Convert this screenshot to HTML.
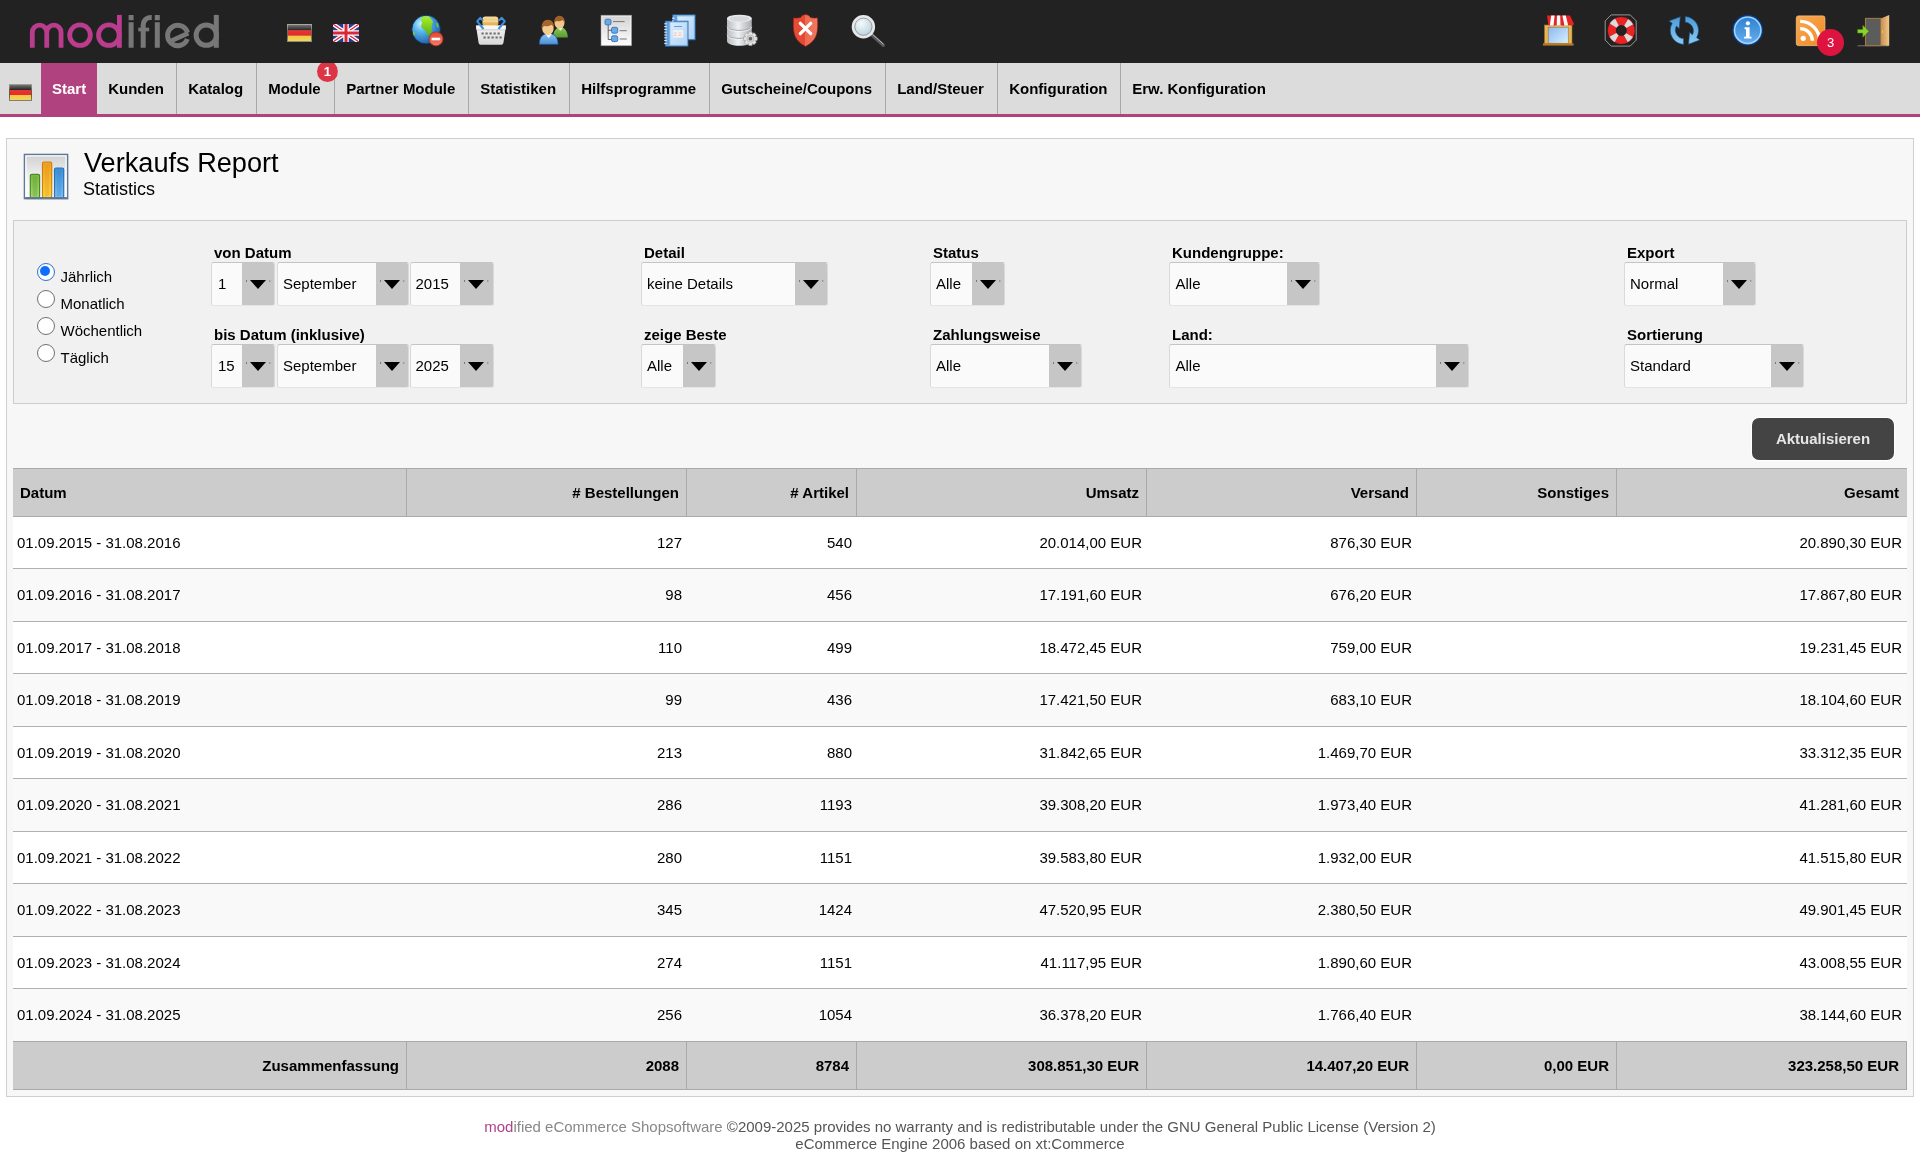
<!DOCTYPE html><html><head><meta charset="utf-8"><title>Verkaufs Report</title><style>
*{box-sizing:border-box;margin:0;padding:0}
html,body{width:1920px;height:1167px;overflow:hidden;background:#fff}
body{font-family:"Liberation Sans",sans-serif;font-size:15px;color:#000;position:relative}
.a{position:absolute}
#hdr{left:0;top:0;width:1920px;height:63px;background:#222}
#tabs{left:0;top:63px;width:1920px;height:51px;background:#dcdcdc}
#pink{left:0;top:114px;width:1920px;height:3px;background:#b0437f}
.tab{top:63px;height:51px;line-height:51px;font-weight:bold;font-size:15px;color:#000;white-space:nowrap;padding-left:11.2px}
.sep{top:63px;width:1px;height:51px;background:#a8a8a8}
.badge{border-radius:50%;background:#dc3545;color:#fff;text-align:center;font-size:14px}
#box{left:6px;top:138px;width:1908px;height:959px;background:#f7f7f7;border:1px solid #cfcfcf}
#filter{left:13px;top:220px;width:1894px;height:184px;background:#f1f1f1;border:1px solid #cccccc}
.lbl{font-weight:bold;font-size:15px;white-space:nowrap;line-height:17px}
.sel{height:44px;background:#fafafa;border:1px solid #dadada;border-top-color:#c4c4c4;border-bottom-color:#e4e4e4;border-radius:2.5px;overflow:hidden}
.sel span{position:absolute;left:5px;top:0;line-height:41px;font-size:15px;white-space:nowrap}
.sel i{position:absolute;right:0;top:0;width:32.4px;height:42px;background:#c6c6c6}
.sel i:after{content:"";position:absolute;left:8.1px;top:16.9px;border-left:8.2px solid transparent;border-right:8.2px solid transparent;border-top:9.6px solid #000}
.sel i:before{content:"";position:absolute;left:4.1px;top:17.4px;width:1px;height:2px;background:#777;box-shadow:23.3px 0 0 #888}
.radio{width:18px;height:18px;border-radius:50%;border:1.4px solid #707070;background:#fff}
.radio.on{border:1.9px solid #2b6fd1;background:#fff}
.radio.on:after{content:"";position:absolute;left:1.85px;top:1.85px;width:10.5px;height:10.5px;border-radius:50%;background:#0d6efd}
.rl{font-size:15px;white-space:nowrap;line-height:17px}
#btn{left:1752px;top:418px;width:142px;height:42px;background:#444;border-radius:7px;color:#e6e6e6;font-weight:bold;text-align:center;line-height:42px;box-shadow:0 0 0 1px #fff}
.row{left:13px;width:1894px;height:53px}
.cell{position:absolute;top:0;white-space:nowrap;font-size:15px}
.hd{background:#cccccc;border-top:1px solid #a9a9a9;border-bottom:1px solid #a9a9a9}
.vs{position:absolute;top:0;width:1px;background:#a9a9a9}
.hs{left:13px;width:1894px;height:1px;background:#b0b0b0}
#foot{left:0;top:1118px;width:1920px;text-align:center;color:#555;font-size:15px;line-height:17px}
</style></head><body><div id="root" class="a" style="left:0;top:0;width:1920px;height:1167px;will-change:transform;background:#fff">
<div id="hdr" class="a"></div>
<svg class="a" style="left:0;top:0" width="240" height="63" viewBox="0 0 240 63">
<g fill="none" stroke-linecap="butt">
<g stroke="#ba3c8d" stroke-width="4.8">
<path d="M32.3 47.8V32.3a7.2 7.2 0 0 1 14.45 0V47.8M46.75 32.3a7.15 7.15 0 0 1 14.3 0V47.8"/>
<circle cx="80" cy="35.15" r="10.3"/>
<circle cx="108.85" cy="35.15" r="10.3"/>
<path d="M119.4 14.9V47.8"/>
</g>
<g stroke="#777" stroke-width="5">
<path d="M131.1 15v5.2M131.1 22.2V47.8"/>
<path d="M143.2 47.8V25a7 7.5 0 0 1 7.5-7.5h1" stroke-width="5"/>
<path d="M138.3 29.5h10.9" stroke-width="3.7"/>
<path d="M157.3 15v5.2M157.3 22.2V47.8"/>
<path d="M187.5 32.6A10.15 10.15 0 1 0 187.3 39"/>
<path d="M188.4 33.2L170.6 41.2" stroke-width="4.6"/>
<circle cx="206.3" cy="35.15" r="10.2"/>
<path d="M216.3 14.9V47.8"/>
</g></g></svg>
<svg class="a" style="left:287px;top:24px" width="25" height="18" viewBox="0 0 25 18">
<defs><linearGradient id="dg" x1="0" y1="0" x2="0" y2="1"><stop offset="0" stop-color="#fff" stop-opacity=".45"/><stop offset=".35" stop-color="#fff" stop-opacity=".05"/><stop offset=".6" stop-color="#fff" stop-opacity="0"/><stop offset="1" stop-color="#fff" stop-opacity=".25"/></linearGradient></defs>
<rect x="0" y="0" width="25" height="18" fill="#6a6a50"/>
<rect x="1" y="1" width="23" height="5.3" fill="#1a1a1a"/>
<rect x="1" y="6.3" width="23" height="5.4" fill="#e82a2a"/>
<rect x="1" y="11.7" width="23" height="5.3" fill="#f0c838"/>
<rect x="0" y="0" width="25" height="18" fill="url(#dg)"/>
</svg>
<svg class="a" style="left:333px;top:24px" width="26" height="18" viewBox="0 0 26 18">
<rect width="26" height="18" fill="#2a3a8a"/>
<path d="M0 0L26 18M26 0L0 18" stroke="#fff" stroke-width="4"/>
<path d="M0 0L26 18M26 0L0 18" stroke="#d8283a" stroke-width="1.3"/>
<path d="M13 0V18M0 9H26" stroke="#fff" stroke-width="5.5"/>
<path d="M13 0V18M0 9H26" stroke="#d8283a" stroke-width="3"/>
</svg>
<svg class="a" style="left:410px;top:13px" width="36" height="36" viewBox="0 0 36 36"><defs><radialGradient id="gg" cx=".32" cy=".3" r=".75"><stop offset="0" stop-color="#c8f0ff"/><stop offset=".35" stop-color="#5ab8f0"/><stop offset="1" stop-color="#1a5ca8"/></radialGradient>
<linearGradient id="gl" x1="0" y1="0" x2="0" y2="1"><stop offset="0" stop-color="#a8f030"/><stop offset="1" stop-color="#58b010"/></linearGradient>
<linearGradient id="rb" x1="0" y1="0" x2="0" y2="1"><stop offset="0" stop-color="#e04a30"/><stop offset="1" stop-color="#f07a66"/></linearGradient></defs>
<circle cx="16.2" cy="16.6" r="14.4" fill="url(#gg)" stroke="#0a2e55" stroke-width=".9"/>
<path d="M11.2 4.6C13.2 3.4 16.4 3 19 3.6 20.8 4.4 20.4 6 22 7 23.6 8 22.6 10.2 21.8 12 21 14 22.4 15.6 21.6 18 21 20.2 19.6 22.6 17.6 22.8 16.4 21 16.6 18.6 15.2 17.4 13.6 16.2 11.6 15.8 11.2 13.6 10.8 11.4 12.6 10.2 11.8 8.4 11.2 7.2 10.2 6 11.2 4.6Z" fill="url(#gl)"/><path d="M26.6 9.2c1.2 1.4 2 3.2 2.1 5.4-1 .2-1.8-.8-2-2-.2-1.2-.6-2.2-.1-3.4z" fill="#7cd020"/>
<path d="M3.2 18.5c1.2-.4 2.2 1 1.8 2.6-.3 1.2-1.4 1-1.8-.2z" fill="#7cd020"/>
<circle cx="26" cy="25.9" r="7" fill="url(#rb)" stroke="#b02818" stroke-width=".8"/>
<rect x="21.6" y="24.7" width="8.6" height="2.6" fill="#fff"/></svg>
<svg class="a" style="left:474px;top:14px" width="34" height="32" viewBox="0 0 34 32"><defs><linearGradient id="bx" x1="0" y1="0" x2="0" y2="1"><stop offset="0" stop-color="#f8e0a0"/><stop offset="1" stop-color="#e0a848"/></linearGradient>
<linearGradient id="bk" x1="0" y1="0" x2="0" y2="1"><stop offset="0" stop-color="#f4f4f4"/><stop offset="1" stop-color="#d8d8d8"/></linearGradient></defs>
<rect x="8.4" y="2.6" width="16" height="9.5" rx="3" fill="url(#bx)"/>
<path d="M9 7.2h15" stroke="#f8e8b8" stroke-width=".8"/>
<path d="M2 11.5h30l-2.6 17.6a2 2 0 0 1-2 1.6H6.6a2 2 0 0 1-2-1.6z" fill="url(#bk)"/>
<path d="M2.3 11.6h29.4v4H2.3z" fill="#f6f6f6"/>
<path d="M3 15.8h28" stroke="#c8c8c8" stroke-width=".8"/>
<g fill="#6a6a6a"><rect x="7.5" y="18.5" width="2.2" height="2"/><rect x="11.5" y="18.5" width="2.2" height="2"/><rect x="15.5" y="18.5" width="2.2" height="2"/><rect x="19.5" y="18.5" width="2.2" height="2"/><rect x="23.5" y="18.5" width="2.2" height="2"/>
<rect x="9.5" y="22.5" width="2.2" height="2"/><rect x="13.5" y="22.5" width="2.2" height="2"/><rect x="17.5" y="22.5" width="2.2" height="2"/><rect x="21.5" y="22.5" width="2.2" height="2"/><rect x="25.5" y="22.5" width="2.2" height="2"/></g>
<path d="M9.5 15L3.2 7.4 6.2 3.8 9 6.6M24.5 15l6.3-7.6-3-3.6-2.8 2.8" fill="none" stroke="#3a90e0" stroke-width="2" stroke-linejoin="round"/></svg>
<svg class="a" style="left:537px;top:14px" width="33" height="32" viewBox="0 0 33 32"><defs><linearGradient id="ug" x1="0" y1="0" x2="0" y2="1"><stop offset="0" stop-color="#8cc858"/><stop offset="1" stop-color="#5a9a30"/></linearGradient>
<linearGradient id="ub" x1="0" y1="0" x2="0" y2="1"><stop offset="0" stop-color="#8cc4f4"/><stop offset="1" stop-color="#4a90d8"/></linearGradient></defs>
<path d="M16 23.5c0-6 3-10.3 7.4-10.3s7.4 4.3 7.4 10.3z" fill="url(#ug)"/>
<path d="M20.6 13.4l2.8 3.4 2.8-3.4z" fill="#f4f4f4"/>
<ellipse cx="22.5" cy="8.8" rx="5" ry="6" fill="#f2c88a"/>
<path d="M17.3 9.5c-.6-5 2-7.8 5.2-7.8s5.8 2.8 5.2 7.8c-.6-2.2-1.6-3.2-2.4-3.6-1.5 1.4-4 1.6-6 1.2-.9.6-1.6 1.4-2 2.4z" fill="#a0602a"/>
<path d="M2.2 30.4c0-7 3.6-10.8 9.45-10.8s9.45 3.8 9.45 10.8z" fill="url(#ub)" stroke="#1a4a8a" stroke-width=".7"/>
<path d="M8.4 19.9l3.25 4.3 3.25-4.3z" fill="#f4f4f4"/>
<ellipse cx="10.9" cy="14" rx="5.8" ry="7" fill="#f4cc90"/>
<path d="M4.8 15c-.8-6 2.4-9.2 6.1-9.2s6.9 3.2 6.1 9.2c-.7-2.6-1.8-3.8-2.8-4.3-1.8 1.6-4.6 1.9-7 1.4-1 .8-1.9 1.7-2.4 2.9z" fill="#a8662c"/></svg>
<svg class="a" style="left:600px;top:14px" width="33" height="33" viewBox="0 0 33 33"><defs><linearGradient id="tg" x1="0" y1="0" x2="0" y2="1"><stop offset="0" stop-color="#d4d4d4"/><stop offset="1" stop-color="#fdfdfd"/></linearGradient></defs>
<rect x="1" y="1.2" width="30.7" height="30.6" fill="#fbfbfb" stroke="#888" stroke-width=".6"/>
<rect x="2.2" y="2.4" width="28.3" height="28.2" fill="url(#tg)"/>
<path d="M8.2 11V25.5h3.4M8.2 16.3h3.4" fill="none" stroke="#444" stroke-width=".8"/>
<g fill="#6aa8e6" stroke="#3274bc" stroke-width=".9"><rect x="5" y="5.2" width="6" height="5.7" rx="1.6"/><rect x="11.5" y="13.3" width="6.2" height="5.9" rx="1.6"/><rect x="11.5" y="21.8" width="6.2" height="5.8" rx="1.6"/></g>
<path d="M13 7.6h11.6M19.7 16.7h7.1M19.7 25h7.1" stroke="#777" stroke-width="1"/></svg>
<svg class="a" style="left:663px;top:13px" width="34" height="35" viewBox="0 0 34 35"><defs><linearGradient id="nb" x1="0" y1="0" x2="1" y2="1"><stop offset="0" stop-color="#d8ecfc"/><stop offset="1" stop-color="#b0d4f6"/></linearGradient></defs>
<rect x="9.8" y="1.9" width="22.3" height="24.9" fill="#a8cef4" stroke="#2a68b0" stroke-width=".9"/>
<rect x="10.3" y="2.4" width="3.6" height="24" fill="#62a0dc"/>
<rect x="14.8" y="3.8" width="15.8" height="21.5" fill="url(#nb)"/>
<rect x="2.3" y="8.2" width="22.7" height="24.9" fill="#a8cef4" stroke="#2a68b0" stroke-width=".9"/>
<rect x="2.8" y="8.7" width="3.8" height="24" fill="#62a0dc"/>
<rect x="7.6" y="10" width="16" height="21.6" fill="url(#nb)"/>
<rect x="10.2" y="17.2" width="10" height="7.4" fill="#f6f2f2"/>
<path d="M10.8 20h3M15.5 20h3M10.8 22.4h3M15.5 22.4h3" stroke="#e0a0a0" stroke-width=".6"/>
<path d="M11 13.5h8" stroke="#5a8ac0" stroke-width=".8"/>
<g stroke="#fff" stroke-width=".9"><path d="M1.2 10.8h2.6M1.2 13.6h2.6M1.2 16.4h2.6M1.2 19.2h2.6M1.2 22h2.6M1.2 24.8h2.6M1.2 27.6h2.6M1.2 30.4h2.6"/><path d="M9 5.2h2.6M9 8h1.4"/></g></svg>
<svg class="a" style="left:725px;top:13px" width="36" height="36" viewBox="0 0 36 36"><defs><linearGradient id="dbg" x1="0" x2="1"><stop offset="0" stop-color="#b8bcc0"/><stop offset=".45" stop-color="#eef0f2"/><stop offset="1" stop-color="#a8acb0"/></linearGradient>
<radialGradient id="gr" cx=".5" cy=".5" r=".5"><stop offset="0" stop-color="#f4f4f4"/><stop offset="1" stop-color="#c8c8c8"/></radialGradient></defs>
<path d="M2 5.5v22.5c0 3 5.5 4.8 12.4 4.8s12.4-1.8 12.4-4.8V5.5z" fill="url(#dbg)"/>
<ellipse cx="14.4" cy="5.5" rx="12.4" ry="3.8" fill="#e4e8ea"/>
<ellipse cx="14.4" cy="5.8" rx="10" ry="2.6" fill="#d4d8dc"/>
<path d="M2 13c0 2.8 5.5 4.4 12.4 4.4S26.8 15.8 26.8 13M2 21c0 2.8 5.5 4.4 12.4 4.4S26.8 23.8 26.8 21" fill="none" stroke="#9a9ea2" stroke-width="1"/>
<path d="M2.5 14c0 2.8 5.5 4.4 11.9 4.4S26.3 16.8 26.3 14M2.5 22c0 2.8 5.5 4.4 11.9 4.4S26.3 24.8 26.3 22" fill="none" stroke="#f4f6f8" stroke-width=".8"/>
<path d="M30.15 23.58 L32.20 24.04 L32.20 27.36 L30.15 27.82 L30.26 27.56 L31.38 29.33 L29.03 31.68 L27.26 30.56 L27.52 30.45 L27.06 32.50 L23.74 32.50 L23.28 30.45 L23.54 30.56 L21.77 31.68 L19.42 29.33 L20.54 27.56 L20.65 27.82 L18.60 27.36 L18.60 24.04 L20.65 23.58 L20.54 23.84 L19.42 22.07 L21.77 19.72 L23.54 20.84 L23.28 20.95 L23.74 18.90 L27.06 18.90 L27.52 20.95 L27.26 20.84 L29.03 19.72 L31.38 22.07 L30.26 23.84Z" fill="#e4e4e4" stroke="#9a9a9a" stroke-width=".6"/>
<circle cx="25.4" cy="25.7" r="3.6" fill="url(#gr)" stroke="#aaa" stroke-width=".5"/>
<circle cx="25.4" cy="25.7" r="1.9" fill="#6a6a6a"/></svg>
<svg class="a" style="left:792px;top:13px" width="28" height="35" viewBox="0 0 28 35"><defs><linearGradient id="sh" x1="0" x2="1"><stop offset="0" stop-color="#e84c36"/><stop offset=".5" stop-color="#e24a32"/><stop offset=".5" stop-color="#ee6a52"/><stop offset="1" stop-color="#f07860"/></linearGradient></defs>
<path d="M13.5 1.6c2.2 0 4 1.2 5 3 2.4.6 4.6.6 7 .2.4 6 .4 11.8-.8 16.2-1.4 5.2-5.2 9.4-11.2 12.4-6-3-9.8-7.2-11.2-12.4C1.1 16.6 1.1 10.8 1.5 4.8c2.4.4 4.6.4 7-.2 1-1.8 2.8-3 5-3z" fill="url(#sh)" stroke="#8a1a10" stroke-width=".6"/>
<path d="M8.3 10.3l10.4 10.4M18.7 10.3L8.3 20.7" stroke="#fff" stroke-width="3.3" stroke-linecap="round"/></svg>
<svg class="a" style="left:850px;top:13px" width="36" height="34" viewBox="0 0 36 34"><defs><radialGradient id="mg" cx=".4" cy=".35" r=".7"><stop offset="0" stop-color="#f4fafc"/><stop offset="1" stop-color="#b4ccd6"/></radialGradient></defs>
<path d="M21.5 21.5L33.3 32.2" stroke="#5a5a5a" stroke-width="3.4" stroke-linecap="round"/>
<path d="M22.3 21.2L33.5 31.2" stroke="#bbb" stroke-width="1"/>
<circle cx="13.4" cy="13.7" r="10.4" fill="url(#mg)" stroke="#e8e8e8" stroke-width="2.6"/>
<circle cx="13.4" cy="13.7" r="8.6" fill="none" stroke="#8a9aa0" stroke-width=".9"/></svg>
<svg class="a" style="left:1541px;top:14px" width="35" height="33" viewBox="0 0 35 33"><defs><linearGradient id="win" x1="0" y1="0" x2="1" y2="1"><stop offset="0" stop-color="#8ab8f0"/><stop offset="1" stop-color="#d8f0fc"/></linearGradient></defs>
<rect x="3.5" y="11" width="27.5" height="19" fill="#e8b458" stroke="#a87020" stroke-width=".6"/>
<rect x="7.2" y="13.2" width="20" height="16" fill="url(#win)" stroke="#8a6a30" stroke-width=".5"/>
<path d="M1.9 29.3h30.6v2.3H1.9z" fill="#b87828"/>
<path d="M6 1.4h23l3.8 8.2c.2 1.2-.6 2-1.8 2-1.5 0-1.8-1.2-2.2-1.2s-.8 1.2-2.2 1.2-1.8-1.2-2.2-1.2-.8 1.2-2.2 1.2-1.8-1.2-2.2-1.2-.8 1.2-2.2 1.2-1.8-1.2-2.2-1.2-.8 1.2-2.2 1.2-1.8-1.2-2.2-1.2-.8 1.2-2.2 1.2-2-.8-1.8-2z" fill="#e62222"/>
<path d="M10.2 1.4h3.4l-1 10h-3.8zM16 1.4h3.2l.3 10h-3.8zM21.4 1.4h3.4l2.4 10h-3.8z" fill="#fafafa"/></svg>
<svg class="a" style="left:1604px;top:13px" width="35" height="35" viewBox="0 0 35 35"><path d="M7.2 1.9h19l6 6v19.2l-6 6h-19l-6-6V7.9z" fill="none" stroke="#c8c8c8" stroke-width=".7"/>
<circle cx="17.3" cy="17.45" r="9.5" fill="none" stroke="#e82424" stroke-width="8"/>
<circle cx="17.3" cy="17.45" r="9.5" fill="none" stroke="#dcdcdc" stroke-width="8" stroke-dasharray="5.2 9.72" stroke-dashoffset="-4.86"/>
<circle cx="17.3" cy="17.45" r="13.4" fill="none" stroke="#b01010" stroke-width=".5" opacity=".5"/></svg>
<svg class="a" style="left:1667px;top:13px" width="35" height="35" viewBox="0 0 35 35"><defs><linearGradient id="rf" x1="0" y1="0" x2="0" y2="1"><stop offset="0" stop-color="#4a9ad8"/><stop offset="1" stop-color="#8acaf4"/></linearGradient></defs>
<g fill="url(#rf)" stroke="#1a4a78" stroke-width=".6">
<path d="M18.2 3.5A14 14 0 0 1 29.6 24.6L32.8 27 21.5 31.2 22.6 19.3 25.4 21.8A8.5 8.5 0 0 0 18.2 9.3Z"/>
<path d="M16.6 31.4A14 14 0 0 1 5.2 10.3L2 7.9 13.3 3.7 12.2 15.6 9.4 13.1A8.5 8.5 0 0 0 16.6 25.6Z"/>
</g></svg>
<svg class="a" style="left:1731px;top:13px" width="34" height="35" viewBox="0 0 34 35"><defs><linearGradient id="ig" x1="0" y1="0" x2="0" y2="1"><stop offset="0" stop-color="#2a7ed0"/><stop offset="1" stop-color="#6ab0ec"/></linearGradient></defs>
<circle cx="16.7" cy="17.2" r="14.8" fill="url(#ig)" stroke="#0a3a80" stroke-width="1.2"/>
<circle cx="16.7" cy="17.2" r="13.1" fill="none" stroke="#a8d8ff" stroke-width="1.3"/>
<circle cx="16.9" cy="10.3" r="2.1" fill="#fff"/>
<path d="M13.6 14.3h5v9.4h1.9v1.9h-7.4v-1.9h1.9v-7.5h-1.4z" fill="#fff"/></svg>
<svg class="a" style="left:1795px;top:14px" width="31" height="33" viewBox="0 0 31 33"><defs><linearGradient id="rs" x1="0" y1="0" x2="1" y2="1"><stop offset="0" stop-color="#f8a850"/><stop offset="1" stop-color="#f08a28"/></linearGradient></defs>
<rect x="1.3" y="1.9" width="28.6" height="29.7" rx="2.2" fill="url(#rs)" stroke="#fcc080" stroke-width=".8"/>
<circle cx="8.2" cy="24.3" r="2.6" fill="#fff"/>
<path d="M5.2 14.6a12.2 12.2 0 0 1 12.2 12.2" fill="none" stroke="#fff" stroke-width="3.4"/>
<path d="M5.2 7.4a19.4 19.4 0 0 1 19.4 19.4" fill="none" stroke="#fff" stroke-width="3.4"/></svg>
<svg class="a" style="left:1856px;top:13px" width="35" height="35" viewBox="0 0 35 35"><defs><linearGradient id="dr" x1="0" x2="1"><stop offset="0" stop-color="#c89050"/><stop offset="1" stop-color="#f0c888"/></linearGradient></defs>
<path d="M1.6 32.8h31" stroke="#777" stroke-width="1"/>
<rect x="9.5" y="5.4" width="15.4" height="27.2" fill="#5c5c5c" stroke="#a07840" stroke-width="1.1"/>
<path d="M24.9 5.4L33.2 2v30.8l-8.3-.2z" fill="url(#dr)"/>
<path d="M26.5 17.5v2.5" stroke="#e8d030" stroke-width="1"/>
<path d="M1.6 16.5h5.2v-4.2l6 6-6 6v-4.2H1.6z" fill="#8ad42a" stroke="#4a8a10" stroke-width=".5"/></svg>
<div class="a badge" style="left:1817px;top:29px;width:27px;height:27px;line-height:27px;font-size:13px;background:#dd1440">3</div>
<div id="tabs" class="a"></div><div id="pink" class="a"></div>
<svg class="a" style="left:9px;top:84px" width="23" height="17" viewBox="0 0 23 17">
<rect width="23" height="17" fill="#5a5a40"/>
<rect x="1" y="1" width="21" height="5" fill="#1a1a1a"/>
<rect x="1" y="6" width="21" height="5" fill="#e82a2a"/>
<rect x="1" y="11" width="21" height="5" fill="#f0c838"/>
<rect width="23" height="17" fill="url(#dg)"/>
</svg>
<div class="a" style="left:41px;top:63px;width:56px;height:51px;background:#b0427f"></div>
<div class="a tab" style="left:41px;padding-left:11px;color:#fff">Start</div>
<div class="a tab" style="left:97px">Kunden</div>
<div class="a sep" style="left:176px"></div>
<div class="a tab" style="left:177px">Katalog</div>
<div class="a sep" style="left:256px"></div>
<div class="a tab" style="left:257px">Module</div>
<div class="a sep" style="left:334px"></div>
<div class="a tab" style="left:335px">Partner Module</div>
<div class="a sep" style="left:468px"></div>
<div class="a tab" style="left:469px">Statistiken</div>
<div class="a sep" style="left:569px"></div>
<div class="a tab" style="left:570px">Hilfsprogramme</div>
<div class="a sep" style="left:709px"></div>
<div class="a tab" style="left:710px">Gutscheine/Coupons</div>
<div class="a sep" style="left:885px"></div>
<div class="a tab" style="left:886px">Land/Steuer</div>
<div class="a sep" style="left:997px"></div>
<div class="a tab" style="left:998px">Konfiguration</div>
<div class="a sep" style="left:1120px"></div>
<div class="a tab" style="left:1121px">Erw. Konfiguration</div>
<div class="a badge" style="left:316.85px;top:61px;width:21px;height:21px;line-height:21px;font-size:13px;font-weight:bold;clip-path:inset(2px 0 0 0)">1</div>
<div id="box" class="a"></div>
<svg class="a" style="left:22px;top:152px" width="48" height="49" viewBox="0 0 48 49">
<defs><linearGradient id="cbg" x1="0" y1="0" x2="0" y2="1"><stop offset="0" stop-color="#d0d0d0"/><stop offset=".55" stop-color="#f4f4f4"/><stop offset="1" stop-color="#fff"/></linearGradient>
<linearGradient id="gb" x1="0" y1="0" x2="0" y2="1"><stop offset="0" stop-color="#7ab840"/><stop offset="1" stop-color="#a8d870"/></linearGradient>
<linearGradient id="ob" x1="0" y1="0" x2="0" y2="1"><stop offset="0" stop-color="#f0a020"/><stop offset="1" stop-color="#f8d840"/></linearGradient>
<linearGradient id="bb" x1="0" y1="0" x2="0" y2="1"><stop offset="0" stop-color="#3a90d8"/><stop offset="1" stop-color="#80c0f0"/></linearGradient></defs>
<rect x="3.5" y="4" width="43" height="44" fill="#000" opacity=".1"/>
<rect x="2.5" y="2.5" width="43" height="44" fill="url(#cbg)" stroke="#60789a" stroke-width="1.6"/>
<rect x="3.9" y="3.9" width="40.2" height="41.2" fill="none" stroke="#fff" stroke-width="1.2"/>
<rect x="8.3" y="22.3" width="9.3" height="23.5" rx="1.5" fill="url(#gb)" stroke="#4a8a2a" stroke-width="1.2"/>
<rect x="10.6" y="24.5" width="4.7" height="20" fill="#5a9a30" opacity=".35"/>
<rect x="20.5" y="10" width="9.2" height="35.8" rx="1.5" fill="url(#ob)" stroke="#d08010" stroke-width="1.2"/>
<rect x="22.8" y="12.2" width="4.6" height="32" fill="#e88a10" opacity=".3"/>
<rect x="32.5" y="16" width="9.2" height="29.8" rx="1.5" fill="url(#bb)" stroke="#2a70b8" stroke-width="1.2"/>
<rect x="34.8" y="18.2" width="4.6" height="26" fill="#2a80d0" opacity=".3"/>
<path d="M3.3 45.7h41.4" stroke="#60789a" stroke-width="1.6"/>
</svg>
<div class="a" style="left:84px;top:147px;font-size:27.15px;line-height:31px;white-space:nowrap">Verkaufs Report</div>
<div class="a" style="left:83px;top:179px;font-size:18px;line-height:20px;white-space:nowrap">Statistics</div>
<div id="filter" class="a"></div>
<div class="a radio on" style="left:37px;top:263px"></div>
<div class="a rl" style="left:60.5px;top:267.5px">Jährlich</div>
<div class="a radio" style="left:37px;top:290px"></div>
<div class="a rl" style="left:60.5px;top:294.5px">Monatlich</div>
<div class="a radio" style="left:37px;top:317px"></div>
<div class="a rl" style="left:60.5px;top:321.5px">Wöchentlich</div>
<div class="a radio" style="left:37px;top:344px"></div>
<div class="a rl" style="left:60.5px;top:348.5px">Täglich</div>
<div class="a lbl" style="left:214px;top:244px">von Datum</div>
<div class="a lbl" style="left:214px;top:326px">bis Datum (inklusive)</div>
<div class="a sel" style="left:211px;top:262px;width:64px"><span style="left:6px">1</span><i></i></div>
<div class="a sel" style="left:277px;top:262px;width:132px"><span style="left:5px">September</span><i></i></div>
<div class="a sel" style="left:409.5px;top:262px;width:84px"><span style="left:5px">2015</span><i></i></div>
<div class="a sel" style="left:211px;top:344px;width:64px"><span style="left:6px">15</span><i></i></div>
<div class="a sel" style="left:277px;top:344px;width:132px"><span style="left:5px">September</span><i></i></div>
<div class="a sel" style="left:409.5px;top:344px;width:84px"><span style="left:5px">2025</span><i></i></div>
<div class="a lbl" style="left:644px;top:244px">Detail</div>
<div class="a sel" style="left:641px;top:262px;width:187px"><span style="left:5px">keine Details</span><i></i></div>
<div class="a lbl" style="left:644px;top:326px">zeige Beste</div>
<div class="a sel" style="left:641px;top:344px;width:75px"><span style="left:5px">Alle</span><i></i></div>
<div class="a lbl" style="left:933px;top:244px">Status</div>
<div class="a sel" style="left:930px;top:262px;width:75px"><span style="left:5px">Alle</span><i></i></div>
<div class="a lbl" style="left:933px;top:326px">Zahlungsweise</div>
<div class="a sel" style="left:930px;top:344px;width:152px"><span style="left:5px">Alle</span><i></i></div>
<div class="a lbl" style="left:1172px;top:244px">Kundengruppe:</div>
<div class="a sel" style="left:1169px;top:262px;width:151px"><span style="left:5.5px">Alle</span><i></i></div>
<div class="a lbl" style="left:1172px;top:326px">Land:</div>
<div class="a sel" style="left:1169px;top:344px;width:300px"><span style="left:5.5px">Alle</span><i></i></div>
<div class="a lbl" style="left:1627px;top:244px">Export</div>
<div class="a sel" style="left:1624px;top:262px;width:132px"><span style="left:5px">Normal</span><i></i></div>
<div class="a lbl" style="left:1627px;top:326px">Sortierung</div>
<div class="a sel" style="left:1624px;top:344px;width:180px"><span style="left:5px">Standard</span><i></i></div>
<div id="btn" class="a">Aktualisieren</div>
<div class="a hd" style="left:13px;top:468px;width:1894px;height:49px;background:#cccccc"></div>
<div class="a cell" style="left:13px;top:468px;width:393px;height:49px;line-height:49px;font-weight:bold;text-align:left;padding-left:7px;">Datum</div>
<div class="a cell" style="left:407px;top:468px;width:279px;height:49px;line-height:49px;font-weight:bold;text-align:right;padding-right:7px;"># Bestellungen</div>
<div class="a cell" style="left:687px;top:468px;width:169px;height:49px;line-height:49px;font-weight:bold;text-align:right;padding-right:7px;"># Artikel</div>
<div class="a cell" style="left:857px;top:468px;width:289px;height:49px;line-height:49px;font-weight:bold;text-align:right;padding-right:7px;">Umsatz</div>
<div class="a cell" style="left:1147px;top:468px;width:269px;height:49px;line-height:49px;font-weight:bold;text-align:right;padding-right:7px;">Versand</div>
<div class="a cell" style="left:1417px;top:468px;width:199px;height:49px;line-height:49px;font-weight:bold;text-align:right;padding-right:7px;">Sonstiges</div>
<div class="a cell" style="left:1617px;top:468px;width:289px;height:49px;line-height:49px;font-weight:bold;text-align:right;padding-right:7px;">Gesamt</div>
<div class="a vs" style="left:406px;top:468px;height:49px"></div>
<div class="a vs" style="left:686px;top:468px;height:49px"></div>
<div class="a vs" style="left:856px;top:468px;height:49px"></div>
<div class="a vs" style="left:1146px;top:468px;height:49px"></div>
<div class="a vs" style="left:1416px;top:468px;height:49px"></div>
<div class="a vs" style="left:1616px;top:468px;height:49px"></div>
<div class="a " style="left:13px;top:517px;width:1894px;height:51px;background:#ffffff"></div>
<div class="a cell" style="left:13px;top:517px;width:393px;height:51px;line-height:51px;text-align:left;padding-left:4px;">01.09.2015 - 31.08.2016</div>
<div class="a cell" style="left:407px;top:517px;width:279px;height:51px;line-height:51px;text-align:right;padding-right:4px;">127</div>
<div class="a cell" style="left:687px;top:517px;width:169px;height:51px;line-height:51px;text-align:right;padding-right:4px;">540</div>
<div class="a cell" style="left:857px;top:517px;width:289px;height:51px;line-height:51px;text-align:right;padding-right:4px;">20.014,00 EUR</div>
<div class="a cell" style="left:1147px;top:517px;width:269px;height:51px;line-height:51px;text-align:right;padding-right:4px;">876,30 EUR</div>
<div class="a cell" style="left:1417px;top:517px;width:199px;height:51px;line-height:51px;text-align:right;padding-right:4px;"></div>
<div class="a cell" style="left:1617px;top:517px;width:289px;height:51px;line-height:51px;text-align:right;padding-right:4px;">20.890,30 EUR</div>
<div class="a hs" style="top:568px"></div>
<div class="a " style="left:13px;top:569px;width:1894px;height:52px;background:#f9f9f9"></div>
<div class="a cell" style="left:13px;top:569px;width:393px;height:52px;line-height:52px;text-align:left;padding-left:4px;">01.09.2016 - 31.08.2017</div>
<div class="a cell" style="left:407px;top:569px;width:279px;height:52px;line-height:52px;text-align:right;padding-right:4px;">98</div>
<div class="a cell" style="left:687px;top:569px;width:169px;height:52px;line-height:52px;text-align:right;padding-right:4px;">456</div>
<div class="a cell" style="left:857px;top:569px;width:289px;height:52px;line-height:52px;text-align:right;padding-right:4px;">17.191,60 EUR</div>
<div class="a cell" style="left:1147px;top:569px;width:269px;height:52px;line-height:52px;text-align:right;padding-right:4px;">676,20 EUR</div>
<div class="a cell" style="left:1417px;top:569px;width:199px;height:52px;line-height:52px;text-align:right;padding-right:4px;"></div>
<div class="a cell" style="left:1617px;top:569px;width:289px;height:52px;line-height:52px;text-align:right;padding-right:4px;">17.867,80 EUR</div>
<div class="a hs" style="top:621px"></div>
<div class="a " style="left:13px;top:622px;width:1894px;height:51px;background:#ffffff"></div>
<div class="a cell" style="left:13px;top:622px;width:393px;height:51px;line-height:51px;text-align:left;padding-left:4px;">01.09.2017 - 31.08.2018</div>
<div class="a cell" style="left:407px;top:622px;width:279px;height:51px;line-height:51px;text-align:right;padding-right:4px;">110</div>
<div class="a cell" style="left:687px;top:622px;width:169px;height:51px;line-height:51px;text-align:right;padding-right:4px;">499</div>
<div class="a cell" style="left:857px;top:622px;width:289px;height:51px;line-height:51px;text-align:right;padding-right:4px;">18.472,45 EUR</div>
<div class="a cell" style="left:1147px;top:622px;width:269px;height:51px;line-height:51px;text-align:right;padding-right:4px;">759,00 EUR</div>
<div class="a cell" style="left:1417px;top:622px;width:199px;height:51px;line-height:51px;text-align:right;padding-right:4px;"></div>
<div class="a cell" style="left:1617px;top:622px;width:289px;height:51px;line-height:51px;text-align:right;padding-right:4px;">19.231,45 EUR</div>
<div class="a hs" style="top:673px"></div>
<div class="a " style="left:13px;top:674px;width:1894px;height:52px;background:#f9f9f9"></div>
<div class="a cell" style="left:13px;top:674px;width:393px;height:52px;line-height:52px;text-align:left;padding-left:4px;">01.09.2018 - 31.08.2019</div>
<div class="a cell" style="left:407px;top:674px;width:279px;height:52px;line-height:52px;text-align:right;padding-right:4px;">99</div>
<div class="a cell" style="left:687px;top:674px;width:169px;height:52px;line-height:52px;text-align:right;padding-right:4px;">436</div>
<div class="a cell" style="left:857px;top:674px;width:289px;height:52px;line-height:52px;text-align:right;padding-right:4px;">17.421,50 EUR</div>
<div class="a cell" style="left:1147px;top:674px;width:269px;height:52px;line-height:52px;text-align:right;padding-right:4px;">683,10 EUR</div>
<div class="a cell" style="left:1417px;top:674px;width:199px;height:52px;line-height:52px;text-align:right;padding-right:4px;"></div>
<div class="a cell" style="left:1617px;top:674px;width:289px;height:52px;line-height:52px;text-align:right;padding-right:4px;">18.104,60 EUR</div>
<div class="a hs" style="top:726px"></div>
<div class="a " style="left:13px;top:727px;width:1894px;height:51px;background:#ffffff"></div>
<div class="a cell" style="left:13px;top:727px;width:393px;height:51px;line-height:51px;text-align:left;padding-left:4px;">01.09.2019 - 31.08.2020</div>
<div class="a cell" style="left:407px;top:727px;width:279px;height:51px;line-height:51px;text-align:right;padding-right:4px;">213</div>
<div class="a cell" style="left:687px;top:727px;width:169px;height:51px;line-height:51px;text-align:right;padding-right:4px;">880</div>
<div class="a cell" style="left:857px;top:727px;width:289px;height:51px;line-height:51px;text-align:right;padding-right:4px;">31.842,65 EUR</div>
<div class="a cell" style="left:1147px;top:727px;width:269px;height:51px;line-height:51px;text-align:right;padding-right:4px;">1.469,70 EUR</div>
<div class="a cell" style="left:1417px;top:727px;width:199px;height:51px;line-height:51px;text-align:right;padding-right:4px;"></div>
<div class="a cell" style="left:1617px;top:727px;width:289px;height:51px;line-height:51px;text-align:right;padding-right:4px;">33.312,35 EUR</div>
<div class="a hs" style="top:778px"></div>
<div class="a " style="left:13px;top:779px;width:1894px;height:52px;background:#f9f9f9"></div>
<div class="a cell" style="left:13px;top:779px;width:393px;height:52px;line-height:52px;text-align:left;padding-left:4px;">01.09.2020 - 31.08.2021</div>
<div class="a cell" style="left:407px;top:779px;width:279px;height:52px;line-height:52px;text-align:right;padding-right:4px;">286</div>
<div class="a cell" style="left:687px;top:779px;width:169px;height:52px;line-height:52px;text-align:right;padding-right:4px;">1193</div>
<div class="a cell" style="left:857px;top:779px;width:289px;height:52px;line-height:52px;text-align:right;padding-right:4px;">39.308,20 EUR</div>
<div class="a cell" style="left:1147px;top:779px;width:269px;height:52px;line-height:52px;text-align:right;padding-right:4px;">1.973,40 EUR</div>
<div class="a cell" style="left:1417px;top:779px;width:199px;height:52px;line-height:52px;text-align:right;padding-right:4px;"></div>
<div class="a cell" style="left:1617px;top:779px;width:289px;height:52px;line-height:52px;text-align:right;padding-right:4px;">41.281,60 EUR</div>
<div class="a hs" style="top:831px"></div>
<div class="a " style="left:13px;top:832px;width:1894px;height:51px;background:#ffffff"></div>
<div class="a cell" style="left:13px;top:832px;width:393px;height:51px;line-height:51px;text-align:left;padding-left:4px;">01.09.2021 - 31.08.2022</div>
<div class="a cell" style="left:407px;top:832px;width:279px;height:51px;line-height:51px;text-align:right;padding-right:4px;">280</div>
<div class="a cell" style="left:687px;top:832px;width:169px;height:51px;line-height:51px;text-align:right;padding-right:4px;">1151</div>
<div class="a cell" style="left:857px;top:832px;width:289px;height:51px;line-height:51px;text-align:right;padding-right:4px;">39.583,80 EUR</div>
<div class="a cell" style="left:1147px;top:832px;width:269px;height:51px;line-height:51px;text-align:right;padding-right:4px;">1.932,00 EUR</div>
<div class="a cell" style="left:1417px;top:832px;width:199px;height:51px;line-height:51px;text-align:right;padding-right:4px;"></div>
<div class="a cell" style="left:1617px;top:832px;width:289px;height:51px;line-height:51px;text-align:right;padding-right:4px;">41.515,80 EUR</div>
<div class="a hs" style="top:883px"></div>
<div class="a " style="left:13px;top:884px;width:1894px;height:52px;background:#f9f9f9"></div>
<div class="a cell" style="left:13px;top:884px;width:393px;height:52px;line-height:52px;text-align:left;padding-left:4px;">01.09.2022 - 31.08.2023</div>
<div class="a cell" style="left:407px;top:884px;width:279px;height:52px;line-height:52px;text-align:right;padding-right:4px;">345</div>
<div class="a cell" style="left:687px;top:884px;width:169px;height:52px;line-height:52px;text-align:right;padding-right:4px;">1424</div>
<div class="a cell" style="left:857px;top:884px;width:289px;height:52px;line-height:52px;text-align:right;padding-right:4px;">47.520,95 EUR</div>
<div class="a cell" style="left:1147px;top:884px;width:269px;height:52px;line-height:52px;text-align:right;padding-right:4px;">2.380,50 EUR</div>
<div class="a cell" style="left:1417px;top:884px;width:199px;height:52px;line-height:52px;text-align:right;padding-right:4px;"></div>
<div class="a cell" style="left:1617px;top:884px;width:289px;height:52px;line-height:52px;text-align:right;padding-right:4px;">49.901,45 EUR</div>
<div class="a hs" style="top:936px"></div>
<div class="a " style="left:13px;top:937px;width:1894px;height:51px;background:#ffffff"></div>
<div class="a cell" style="left:13px;top:937px;width:393px;height:51px;line-height:51px;text-align:left;padding-left:4px;">01.09.2023 - 31.08.2024</div>
<div class="a cell" style="left:407px;top:937px;width:279px;height:51px;line-height:51px;text-align:right;padding-right:4px;">274</div>
<div class="a cell" style="left:687px;top:937px;width:169px;height:51px;line-height:51px;text-align:right;padding-right:4px;">1151</div>
<div class="a cell" style="left:857px;top:937px;width:289px;height:51px;line-height:51px;text-align:right;padding-right:4px;">41.117,95 EUR</div>
<div class="a cell" style="left:1147px;top:937px;width:269px;height:51px;line-height:51px;text-align:right;padding-right:4px;">1.890,60 EUR</div>
<div class="a cell" style="left:1417px;top:937px;width:199px;height:51px;line-height:51px;text-align:right;padding-right:4px;"></div>
<div class="a cell" style="left:1617px;top:937px;width:289px;height:51px;line-height:51px;text-align:right;padding-right:4px;">43.008,55 EUR</div>
<div class="a hs" style="top:988px"></div>
<div class="a " style="left:13px;top:989px;width:1894px;height:52px;background:#f9f9f9"></div>
<div class="a cell" style="left:13px;top:989px;width:393px;height:52px;line-height:52px;text-align:left;padding-left:4px;">01.09.2024 - 31.08.2025</div>
<div class="a cell" style="left:407px;top:989px;width:279px;height:52px;line-height:52px;text-align:right;padding-right:4px;">256</div>
<div class="a cell" style="left:687px;top:989px;width:169px;height:52px;line-height:52px;text-align:right;padding-right:4px;">1054</div>
<div class="a cell" style="left:857px;top:989px;width:289px;height:52px;line-height:52px;text-align:right;padding-right:4px;">36.378,20 EUR</div>
<div class="a cell" style="left:1147px;top:989px;width:269px;height:52px;line-height:52px;text-align:right;padding-right:4px;">1.766,40 EUR</div>
<div class="a cell" style="left:1417px;top:989px;width:199px;height:52px;line-height:52px;text-align:right;padding-right:4px;"></div>
<div class="a cell" style="left:1617px;top:989px;width:289px;height:52px;line-height:52px;text-align:right;padding-right:4px;">38.144,60 EUR</div>
<div class="a hd" style="left:13px;top:1041px;width:1894px;height:49px;background:#cccccc"></div>
<div class="a cell" style="left:13px;top:1041px;width:393px;height:49px;line-height:49px;font-weight:bold;text-align:right;padding-right:7px;">Zusammenfassung</div>
<div class="a cell" style="left:407px;top:1041px;width:279px;height:49px;line-height:49px;font-weight:bold;text-align:right;padding-right:7px;">2088</div>
<div class="a cell" style="left:687px;top:1041px;width:169px;height:49px;line-height:49px;font-weight:bold;text-align:right;padding-right:7px;">8784</div>
<div class="a cell" style="left:857px;top:1041px;width:289px;height:49px;line-height:49px;font-weight:bold;text-align:right;padding-right:7px;">308.851,30 EUR</div>
<div class="a cell" style="left:1147px;top:1041px;width:269px;height:49px;line-height:49px;font-weight:bold;text-align:right;padding-right:7px;">14.407,20 EUR</div>
<div class="a cell" style="left:1417px;top:1041px;width:199px;height:49px;line-height:49px;font-weight:bold;text-align:right;padding-right:7px;">0,00 EUR</div>
<div class="a cell" style="left:1617px;top:1041px;width:289px;height:49px;line-height:49px;font-weight:bold;text-align:right;padding-right:7px;">323.258,50 EUR</div>
<div class="a vs" style="left:406px;top:1041px;height:49px"></div>
<div class="a vs" style="left:686px;top:1041px;height:49px"></div>
<div class="a vs" style="left:856px;top:1041px;height:49px"></div>
<div class="a vs" style="left:1146px;top:1041px;height:49px"></div>
<div class="a vs" style="left:1416px;top:1041px;height:49px"></div>
<div class="a vs" style="left:1616px;top:1041px;height:49px"></div>
<div class="a" style="left:1906px;top:1041px;width:1px;height:49px;background:#a9a9a9"></div>
<div id="foot" class="a"><span style="color:#b0428a">mod</span><span style="color:#888">ified eCommerce Shopsoftware</span> &copy;2009-2025 provides no warranty and is redistributable under the GNU General Public License (Version 2)<br>eCommerce Engine 2006 based on xt:Commerce</div>
</div></body></html>
